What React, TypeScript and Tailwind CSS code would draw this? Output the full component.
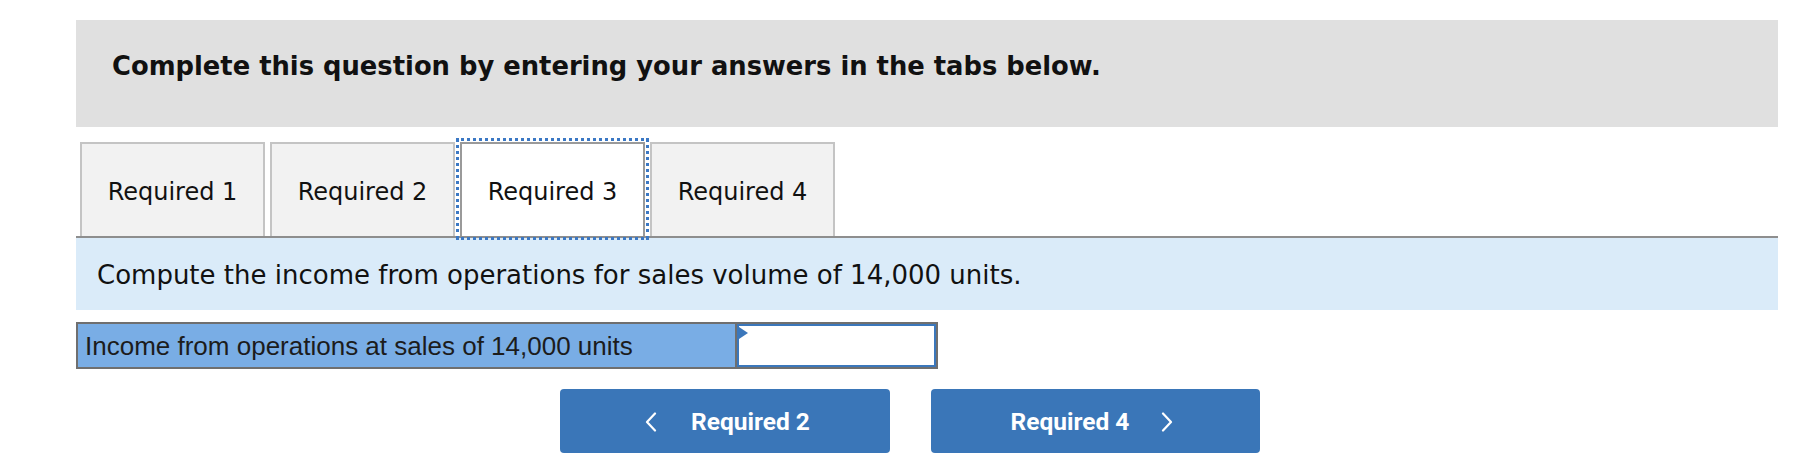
import React from 'react';

const tabs = ['Required 1', 'Required 2', 'Required 3', 'Required 4'];

const ChevronLeft = () => (
  <svg width="14" height="20" viewBox="0 0 14 20" fill="none">
    <polyline points="11,1.5 3,10 11,18.5" stroke="white" strokeWidth="2.2" strokeLinecap="round" strokeLinejoin="round" />
  </svg>
);

const ChevronRight = () => (
  <svg width="14" height="20" viewBox="0 0 14 20" fill="none">
    <polyline points="3,1.5 11,10 3,18.5" stroke="white" strokeWidth="2.2" strokeLinecap="round" strokeLinejoin="round" />
  </svg>
);

const App = () => {
  const active = 2;

  return (
    <div className="w-[1816px] h-[474px] bg-white">
      <div className="ml-[76px] w-[1702px] pt-5">
        {/* instructions banner */}
        <div className="h-[107px] bg-[#e0e0e0] pl-9 pt-[34px]">
          <h2 className="font-['DejaVu_Sans',sans-serif] font-bold text-[25.8px] leading-[25.8px] text-[#111]">
            Complete this question by entering your answers in the tabs below.
          </h2>
        </div>

        {/* tabs */}
        <div className="flex gap-[5px] pl-[4px] mt-[15px]">
          {tabs.map((t, i) => (
            <div
              key={t}
              className={
                i === active
                  ? 'w-[185px] h-[94px] border-2 border-b-0 border-[#9a9a9a] bg-white outline-[3px] outline-dotted outline-offset-1 outline-[#3b78c4] pt-[36px] text-center'
                  : 'w-[185px] h-[94px] border-2 border-b-0 border-[#c4c4c4] bg-[#f2f2f2] pt-[36px] text-center'
              }
            >
              <span className="font-['DejaVu_Sans',sans-serif] text-[24px] leading-[24px] text-[#111]">{t}</span>
            </div>
          ))}
        </div>
        <div className="h-[2px] bg-[#8e8e8e]" />

        {/* question */}
        <div className="h-[72px] bg-[#daebf9] pl-[21px] pt-[24px]">
          <p className="font-['DejaVu_Sans',sans-serif] text-[26px] leading-[26px] text-[#111]">
            Compute the income from operations for sales volume of 14,000 units.
          </p>
        </div>

        {/* answer table */}
        <div className="mt-3 w-[862px] h-[47px] border-2 border-[#6f6f6f] flex">
          <div className="w-[659px] bg-[#79ade5] flex items-center pl-[7px] border-r-2 border-[#6f6f6f]">
            <span className="font-['Liberation_Sans',Arial,sans-serif] text-[26px] leading-[26px] text-[#1c1c1c]">
              Income from operations at sales of 14,000 units
            </span>
          </div>
          <div className="relative flex-1 bg-white border-2 border-[#3b77bb]">
            <div className="absolute left-0 top-[1px] w-0 h-0 border-y-[6px] border-y-transparent border-l-[9px] border-l-[#3b77bb]" />
          </div>
        </div>

        {/* navigation */}
        <div className="flex gap-[41px] ml-[484px] mt-5">
          <button className="w-[330px] h-[64px] rounded-[4px] bg-[#3a76b8] flex items-center justify-center gap-[33px] pt-[2px] pl-[4px]">
            <ChevronLeft />
            <span className="font-['Roboto',sans-serif] font-bold text-[24.5px] leading-[24.5px] text-white">Required 2</span>
          </button>
          <button className="w-[329px] h-[64px] rounded-[4px] bg-[#3a76b8] flex items-center justify-center gap-[31px] pt-[2px] pr-[6px]">
            <span className="font-['Roboto',sans-serif] font-bold text-[24.5px] leading-[24.5px] text-white">Required 4</span>
            <ChevronRight />
          </button>
        </div>
      </div>
    </div>
  );
};

export default App;
